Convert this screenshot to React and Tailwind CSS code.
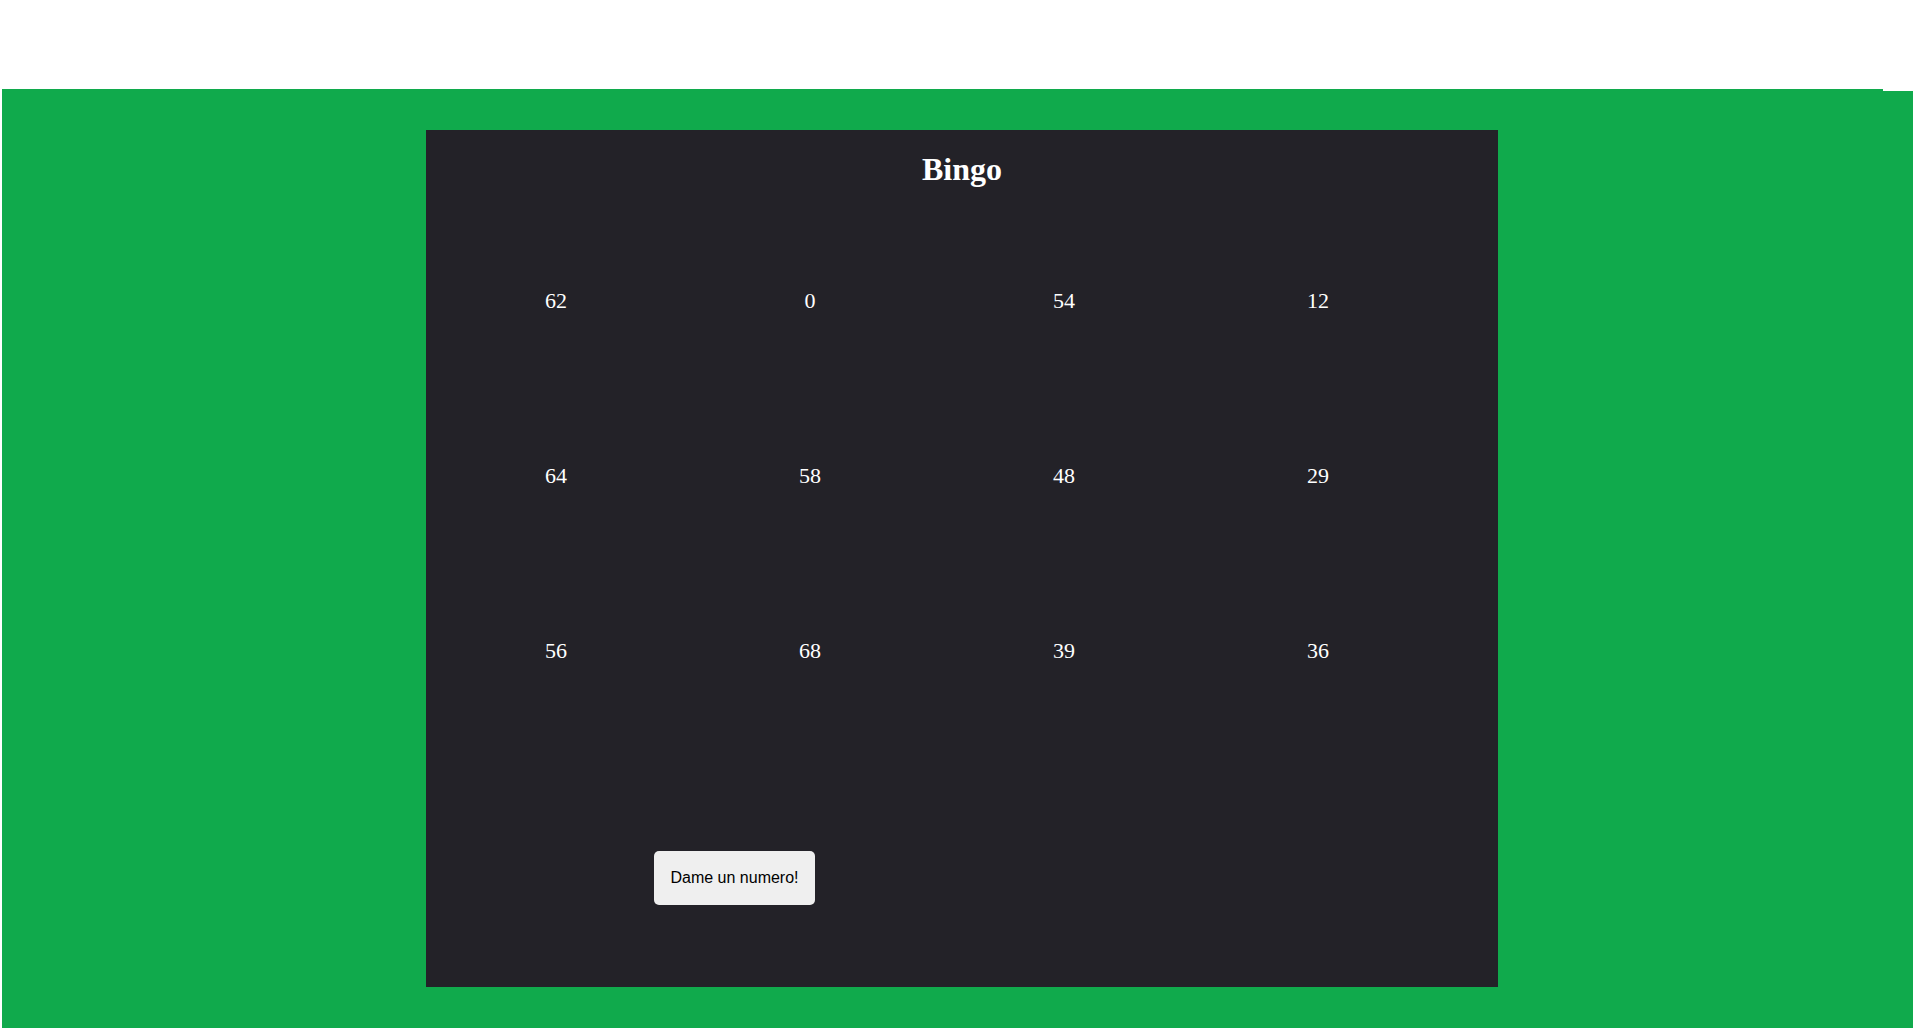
import React, { useState } from "react";

const numeros = [62, 0, 54, 12, 64, 58, 48, 29, 56, 68, 39, 36];

function App() {
  const [nums, setNums] = useState(numeros);

  const dameNumero = () => {
    setNums(nums.map(() => Math.floor(Math.random() * 75)));
  };

  return (
    <div className="w-[1913px] min-h-[1029px] bg-white pt-[89px]">
      <div className="ml-[2px] bg-[#10aa4c] pb-[41px]">
        <div className="flex">
          <div className="flex-1" />
          <div className="w-[30px] h-[2px] bg-white" />
        </div>
        <div
          className="ml-[424px] mt-[39px] w-[1072px] h-[857px] bg-[#232228] pt-[21px]"
          style={{ fontFamily: '"Liberation Serif", "Times New Roman", serif' }}
        >
          <h1 className="text-center text-[32px] font-bold text-white leading-[36.8px]">
            Bingo
          </h1>
          <div className="mt-[100px] ml-[3px] grid w-[1016px] grid-cols-4">
            {nums.map((n, i) => (
              <div
                key={i}
                className="h-[175px] text-center text-[22px] text-white leading-[25.3px]"
              >
                {n}
              </div>
            ))}
          </div>
          <button
            onClick={dameNumero}
            className="mt-[38px] ml-[228px] w-[161px] h-[54px] rounded-[5px] bg-[#efefef] text-[16px] text-black"
            style={{ fontFamily: '"Liberation Sans", Arial, sans-serif' }}
          >
            Dame un numero!
          </button>
        </div>
      </div>
    </div>
  );
}

export default App;
